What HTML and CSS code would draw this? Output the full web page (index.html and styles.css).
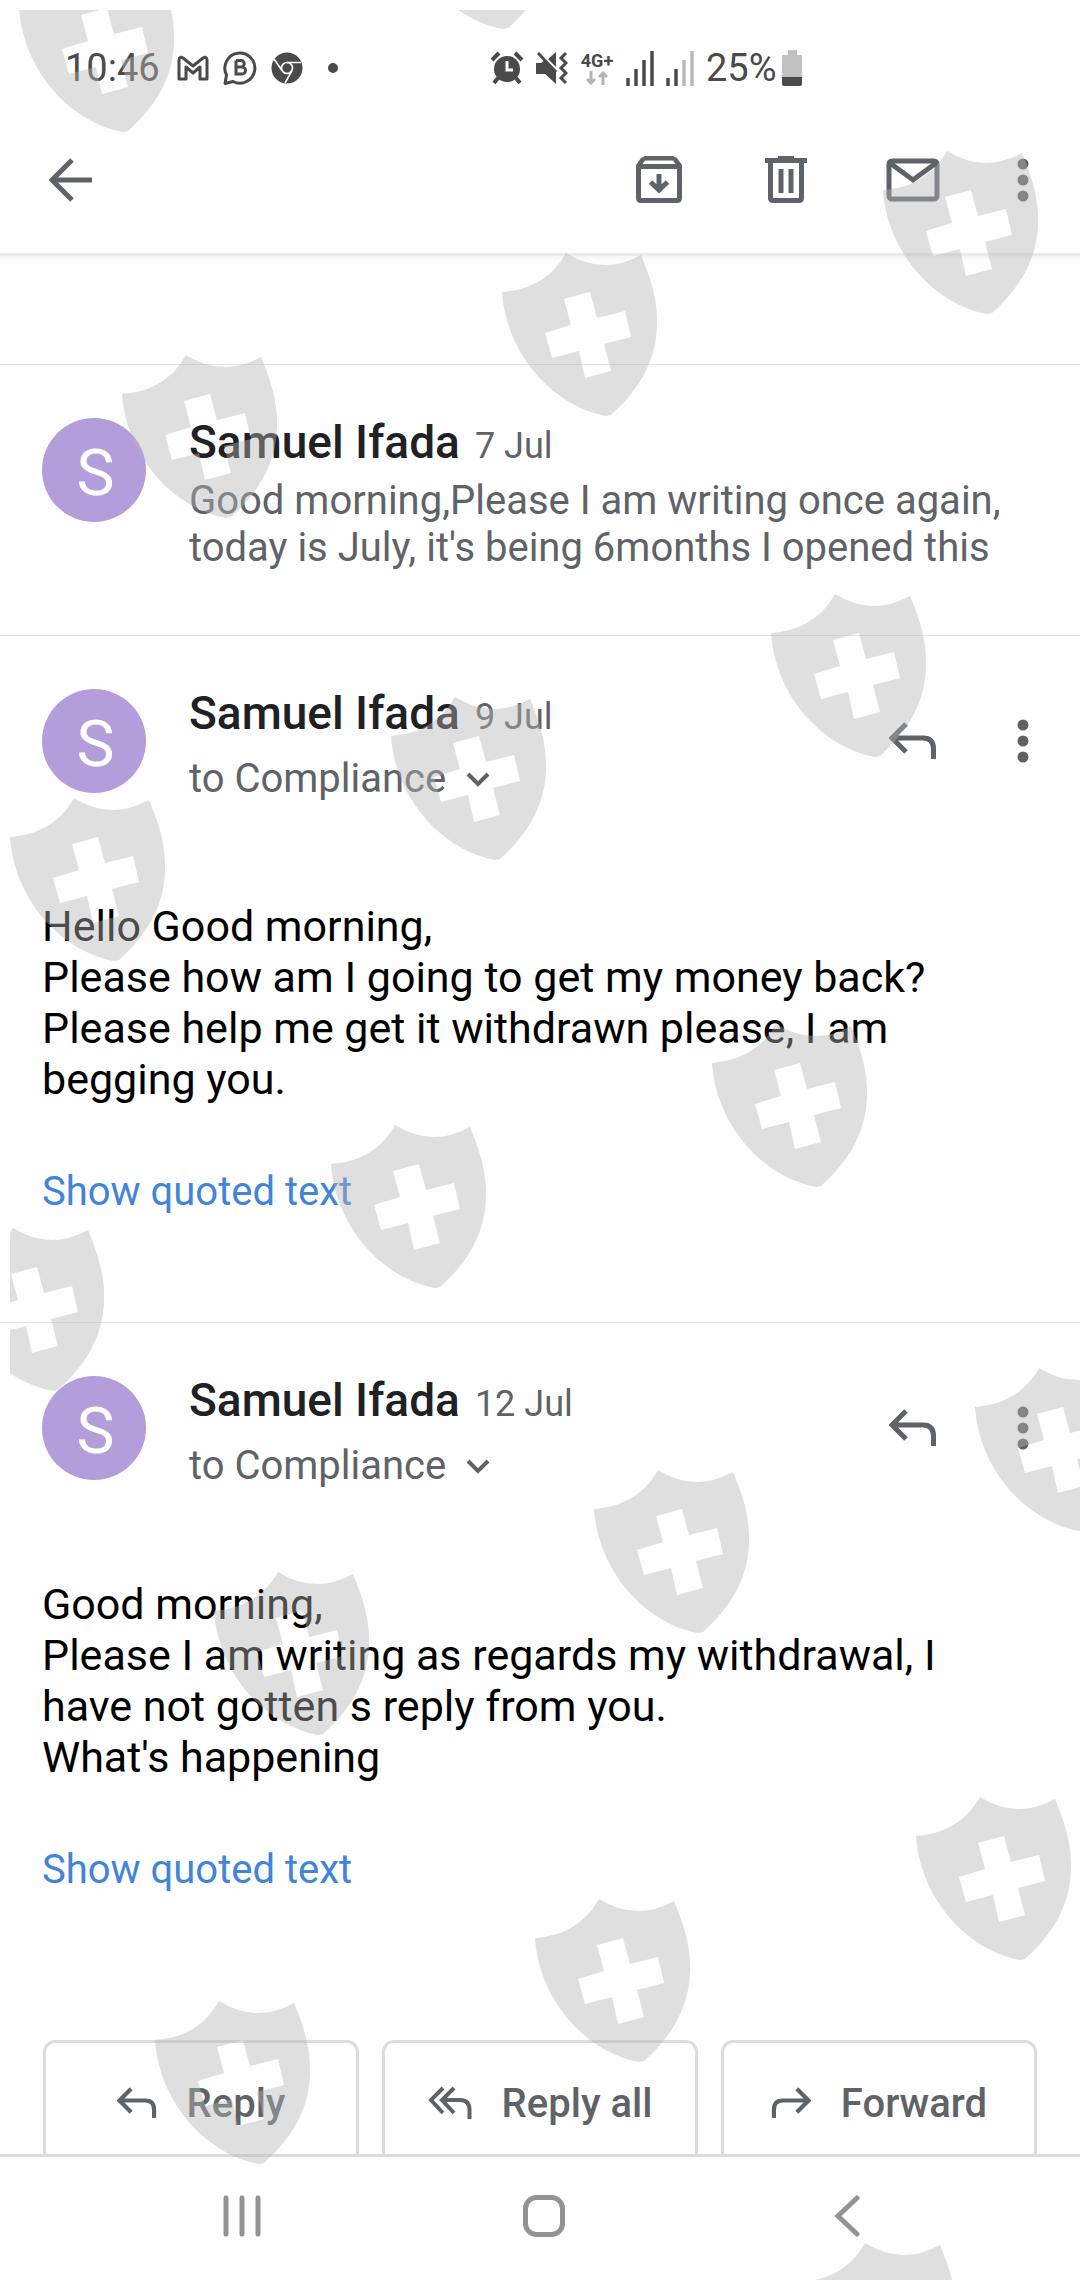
FILE: index.html
```html
<!DOCTYPE html>
<html lang="en">
<head>
<meta charset="utf-8">
<meta name="viewport" content="width=device-width, initial-scale=1">
<title>Conversation</title>
<link rel="stylesheet" href="styles.css">
</head>
<body>
<svg class="defs" aria-hidden="true">
  <defs>
    <path id="shield" fill-rule="evenodd" d="M0 39C25 37 48 28 64 0Q101 23 139 2C150 28 156 50 155 73C154 110 135 139 109 162L104 163C50 153 4 100 0 39ZM62 46L69 72L43 80L50 105L77 98L83 125L109 118L102 91L129 84L123 58L95 65L88 39Z"/>
    <symbol id="reply" viewBox="0 0 48 40">
      <path d="M17 3L3 17L17 31M4 17H34Q44.500 17 44.500 28V38" fill="none" stroke="currentColor" stroke-width="5"/>
    </symbol>
    <symbol id="dots" viewBox="0 0 12 44">
      <circle cx="6" cy="6" r="5.500"/><circle cx="6" cy="22" r="5.500"/><circle cx="6" cy="38" r="5.500"/>
    </symbol>
  </defs>
</svg>
<div class="screen">
  <div class="status">
    <div class="status-left">
      <time class="clock">10:46</time>
      <svg width="32" height="26" viewBox="0 0 32 26"><path d="M2 5Q2 1 6 3L16 11L26 3Q30 1 30 5V24H23V12L16 18L9 12V24H2Z" fill="none" stroke="currentColor" stroke-width="3" stroke-linejoin="round"/></svg>
      <svg width="34" height="36" viewBox="0 0 34 36"><path d="M2 33.500L3.500 25A15 15 0 1 1 10 31.500Z" fill="none" stroke="currentColor" stroke-width="3" stroke-linejoin="round"/><path d="M13 10.500V24H19A3.500 3.500 0 0 0 19 17H13M13 10.500H18A3.200 3.200 0 0 1 18 17" fill="none" stroke="currentColor" stroke-width="3"/></svg>
      <svg width="32" height="32" viewBox="0 0 32 32"><circle cx="16" cy="16" r="15.500" fill="currentColor"/><g fill="none" stroke="#fefefe" stroke-width="1.600"><circle cx="16" cy="16" r="5.500"/><path d="M16 10.500H30M11 18.500L3 7M21 18.500L14 31"/></g></svg>
      <svg class="more-dot" width="12" height="12" viewBox="0 0 12 12"><circle cx="6" cy="6" r="5" fill="currentColor"/></svg>
    </div>
    <div class="status-right">
      <svg width="34" height="34" viewBox="0 0 34 34"><circle cx="17" cy="18" r="13" fill="currentColor"/><path d="M2 9L9 2M32 9L25 2M8 27L4 32M26 27L30 32" stroke="currentColor" stroke-width="4"/><path d="M17 10V19H23" fill="none" stroke="#fefefe" stroke-width="3"/></svg>
      <svg width="32" height="34" viewBox="0 0 32 34"><path d="M0 12H6L20 26V33L9 23H0ZM12 8L20 1V16ZM5 12L9 9L20 21V33Z" fill="currentColor"/><path d="M2 2L20 21" stroke="currentColor" stroke-width="3"/><path d="M30 2L25 7L30 12L25 17L30 22L25 27L30 32" fill="none" stroke="currentColor" stroke-width="3"/></svg>
      <span class="network"><span>4G+</span>
        <svg width="22" height="14" viewBox="0 0 22 14"><path d="M5 0V12M1 8L5 12L9 8M17 14V2M13 6L17 2L21 6" fill="none" stroke="#b5b5b5" stroke-width="3"/></svg></span>
      <svg width="28" height="36" viewBox="0 0 28 36"><path d="M2 28V36M10 19V36M18 10V36M26 1V36" stroke="currentColor" stroke-width="3.500"/></svg>
      <svg width="28" height="36" viewBox="0 0 28 36"><path d="M2 28V36M10 19V36" stroke="currentColor" stroke-width="3.500"/><path d="M18 10V36M26 1V36" stroke="#b9b9b9" stroke-width="3.500"/></svg>
      <span class="battery"><span>25%</span>
        <svg width="22" height="38" viewBox="0 0 22 38"><path d="M1 6H7V1H16V6H21V28H1Z" fill="#c2c2c2"/><path d="M1 28H21V35Q21 37 19 37H3Q1 37 1 35Z" fill="currentColor"/></svg></span>
    </div>
  </div>

  <header class="toolbar">
    <button class="icon-btn" aria-label="Back"><svg width="44" height="44" viewBox="0 0 44 44"><path d="M23 2L3 22L23 42M4 22H43" fill="none" stroke="currentColor" stroke-width="5"/></svg></button>
    <div class="actions">
      <button class="icon-btn" aria-label="Archive"><svg width="48" height="48" viewBox="0 0 48 48"><path fill-rule="evenodd" d="M10 0H38L42 2L47 9V42Q47 47 42 47H6Q1 47 1 42V9L6 2ZM10 4.500L7.500 8H40.500L38 4.500ZM6 13V42H42V13Z"/><path d="M24 18V33M15.500 26L24 34L32.500 26" fill="none" stroke="currentColor" stroke-width="5"/></svg></button>
      <button class="icon-btn" aria-label="Delete"><svg width="44" height="48" viewBox="0 0 44 48"><path fill-rule="evenodd" d="M1 2H14V0H30V2H43V7H40V42Q40 47 35 47H9Q4 47 4 42V7H1ZM9 7V42H35V7ZM14.500 13H19.500V37H14.500ZM24.500 13H29.500V37H24.500Z"/></svg></button>
      <button class="icon-btn" aria-label="Mark unread"><svg width="54" height="44" viewBox="0 0 54 44"><rect x="3" y="3" width="48" height="38" rx="3" fill="none" stroke="currentColor" stroke-width="5"/><path d="M4 5L27 22L50 5" fill="none" stroke="currentColor" stroke-width="5"/></svg></button>
      <button class="icon-btn more" aria-label="More"><svg width="12" height="44"><use href="#dots"/></svg></button>
    </div>
  </header>

  <main class="thread">
    <article class="message collapsed">
      <div class="avatar">S</div>
      <div class="meta">
        <div class="from"><h2>Samuel Ifada</h2><time>7 Jul</time></div>
        <p class="snippet">Good morning,Please I am writing once again,<br>today is July, it's being 6months I opened this</p>
      </div>
    </article>

    <article class="message">
      <div class="head">
        <div class="avatar">S</div>
        <div class="meta">
          <div class="from"><h2>Samuel Ifada</h2><time>9 Jul</time></div>
          <button class="to">to Compliance <svg width="24" height="16" viewBox="0 0 24 16"><path d="M2 3L12 13L22 3" fill="none" stroke="currentColor" stroke-width="4"/></svg></button>
        </div>
        <div class="actions">
          <button class="icon-btn" aria-label="Reply"><svg width="48" height="40"><use href="#reply"/></svg></button>
          <button class="icon-btn more" aria-label="More"><svg width="12" height="44"><use href="#dots"/></svg></button>
        </div>
      </div>
      <p class="body">Hello Good morning,<br>Please how am I going to get my money back?<br>Please help me get it withdrawn please, I am<br>begging you.</p>
      <a class="quoted" href="#">Show quoted text</a>
    </article>

    <article class="message last">
      <div class="head">
        <div class="avatar">S</div>
        <div class="meta">
          <div class="from"><h2>Samuel Ifada</h2><time>12 Jul</time></div>
          <button class="to">to Compliance <svg width="24" height="16" viewBox="0 0 24 16"><path d="M2 3L12 13L22 3" fill="none" stroke="currentColor" stroke-width="4"/></svg></button>
        </div>
        <div class="actions">
          <button class="icon-btn" aria-label="Reply"><svg width="48" height="40"><use href="#reply"/></svg></button>
          <button class="icon-btn more" aria-label="More"><svg width="12" height="44"><use href="#dots"/></svg></button>
        </div>
      </div>
      <p class="body">Good morning,<br>Please I am writing as regards my withdrawal, I<br>have not gotten s reply from you.<br>What's happening</p>
      <a class="quoted" href="#">Show quoted text</a>
    </article>

    <div class="replies">
      <button><svg width="40" height="34" viewBox="0 0 48 40"><use href="#reply"/></svg>Reply</button>
      <button><svg width="44" height="34" viewBox="0 0 44 34"><path d="M15 2L3 14L15 27M26 2L14 14L26 27M15 14H32Q41.500 14 41.500 24V33" fill="none" stroke="currentColor" stroke-width="4"/></svg>Reply all</button>
      <button><svg class="flip" width="40" height="34" viewBox="0 0 48 40"><use href="#reply"/></svg>Forward</button>
    </div>
  </main>

  <nav class="navbar">
    <button aria-label="Recents"><svg width="40" height="42" viewBox="0 0 40 42"><path d="M4 3V39M20 3V39M36 3V39" stroke="currentColor" stroke-width="5" stroke-linecap="round"/></svg></button>
    <button aria-label="Home"><svg width="42" height="42" viewBox="0 0 42 42"><rect x="2.500" y="2.500" width="37" height="37" rx="11" fill="none" stroke="currentColor" stroke-width="5"/></svg></button>
    <button aria-label="Back"><svg width="26" height="42" viewBox="0 0 26 42"><path d="M23 3L4 21L23 39" fill="none" stroke="currentColor" stroke-width="5" stroke-linecap="round"/></svg></button>
  </nav>

  <svg class="watermark" aria-hidden="true">
    <use href="#shield" x="9" y="-41"/><use href="#shield" x="389" y="-144"/>
    <use href="#shield" x="873" y="141"/><use href="#shield" x="492" y="243"/><use href="#shield" x="112" y="345"/>
    <use href="#shield" x="761" y="584"/><use href="#shield" x="381" y="687"/><use href="#shield" x="0" y="788"/>
    <use href="#shield" x="702" y="1014"/><use href="#shield" x="321" y="1115"/><use href="#shield" x="-61" y="1218"/>
    <use href="#shield" x="965" y="1358"/><use href="#shield" x="584" y="1460"/><use href="#shield" x="204" y="1562"/>
    <use href="#shield" x="906" y="1787"/><use href="#shield" x="525" y="1889"/><use href="#shield" x="145" y="1991"/>
    <use href="#shield" x="791" y="2233"/>
  </svg>
</div>
</body>
</html>
```
FILE: styles.css
```css
* { box-sizing: border-box; }

body {
  margin: 0;
  background: #fefefe;
  color: #5f6368;
  font-family: Roboto, "Liberation Sans", sans-serif;
}

h2, p { margin: 0; }

svg { display: block; flex: none; fill: currentColor; }

.defs { position: absolute; width: 0; height: 0; }

button {
  margin: 0;
  padding: 0;
  border: 0;
  background: none;
  color: inherit;
  font: inherit;
}

.screen {
  position: relative;
  display: flex;
  flex-direction: column;
  height: 100vh;
  overflow: hidden;
}

/* Status bar */
.status {
  display: grid;
  grid-template-columns: 490fr 590fr;
  align-items: center;
  height: 117px;
  padding-top: 18px;
  color: #4a4a4a;
  font-size: 38px;
  line-height: 44px;
}

.status-left, .status-right {
  display: flex;
  align-items: center;
  gap: 14px;
}

.status-left { padding-left: 65px; }
.status-right { gap: 12px; }
.clock { width: 98px; }
.more-dot { margin-left: 10px; }

.network {
  display: flex;
  flex-direction: column;
  align-items: center;
  width: 34px;
  font-size: 18px;
  font-weight: 700;
  line-height: 20px;
}

.battery { display: flex; align-items: center; gap: 4px; }

/* Toolbar */
.toolbar {
  display: flex;
  align-items: center;
  justify-content: space-between;
  height: 139px;
  padding: 0 42px 11px 39px;
  border-bottom: 3px solid #ebebeb;
  box-shadow: 0 2px 4px #f2f2f2;
}

.actions { display: flex; align-items: center; gap: 63px; }

.icon-btn {
  display: flex;
  align-items: center;
  justify-content: center;
  width: 64px;
  height: 64px;
}

.icon-btn.more { width: 30px; }

/* Messages */
.thread {
  flex: 1;
  min-height: 0;
  padding-top: 108px;
  overflow: hidden;
}

.message {
  padding: 53px 42px 106px;
  border-top: 1px solid #e4e4e4;
}

.message.collapsed {
  display: flex;
  gap: 43px;
  padding-bottom: 64px;
}

.head {
  display: flex;
  gap: 43px;
  margin-bottom: 99px;
}

.head .actions { height: 104px; }

.avatar {
  display: flex;
  flex: none;
  align-items: center;
  justify-content: center;
  width: 104px;
  height: 104px;
  padding: 6px 0 0 3px;
  border-radius: 50%;
  background: #b39ddb;
  color: #fff;
  font-size: 64px;
}

.meta { flex: 1; min-width: 0; }

.from { display: flex; align-items: baseline; gap: 15px; }

.from h2 {
  color: #202124;
  font-size: 46px;
  font-weight: 500;
  line-height: 48px;
}

.from time { font-size: 36px; line-height: 48px; }

.snippet {
  margin-top: 7px;
  font-size: 40px;
  line-height: 47px;
  white-space: nowrap;
}

.to {
  display: flex;
  align-items: center;
  gap: 20px;
  margin-top: 14px;
  font-size: 40px;
  line-height: 47px;
}

.body {
  color: #000;
  font-size: 43px;
  line-height: 51px;
}

.quoted {
  display: block;
  margin-top: 63px;
  color: #4285d8;
  font-size: 40px;
  line-height: 48px;
  text-decoration: none;
}

.last { padding-bottom: 146px; }
.last .head { margin-bottom: 90px; }

/* Reply actions */
.replies {
  display: grid;
  grid-template-columns: repeat(3, 1fr);
  gap: 23px;
  padding: 0 43px;
}

.replies button {
  display: flex;
  align-items: center;
  justify-content: center;
  gap: 30px;
  height: 126px;
  border: 3px solid #dcdcdc;
  border-radius: 12px;
  font-size: 40px;
  font-weight: 500;
}

.flip { transform: scaleX(-1); }

/* System navigation */
.navbar {
  display: grid;
  grid-template-columns: repeat(3, 1fr);
  height: 126px;
  padding: 0 82px 5px 91px;
  border-top: 3px solid #dcdcdc;
  color: #939393;
}

.navbar button {
  display: flex;
  align-items: center;
  justify-content: center;
}

/* Watermark laid over the whole screen */
.watermark {
  position: absolute;
  inset: 10px 0 0 10px;
  width: calc(100% - 10px);
  height: calc(100% - 10px);
  overflow: hidden;
  fill: #b6b6b6;
  opacity: 0.42;
  pointer-events: none;
}
```
